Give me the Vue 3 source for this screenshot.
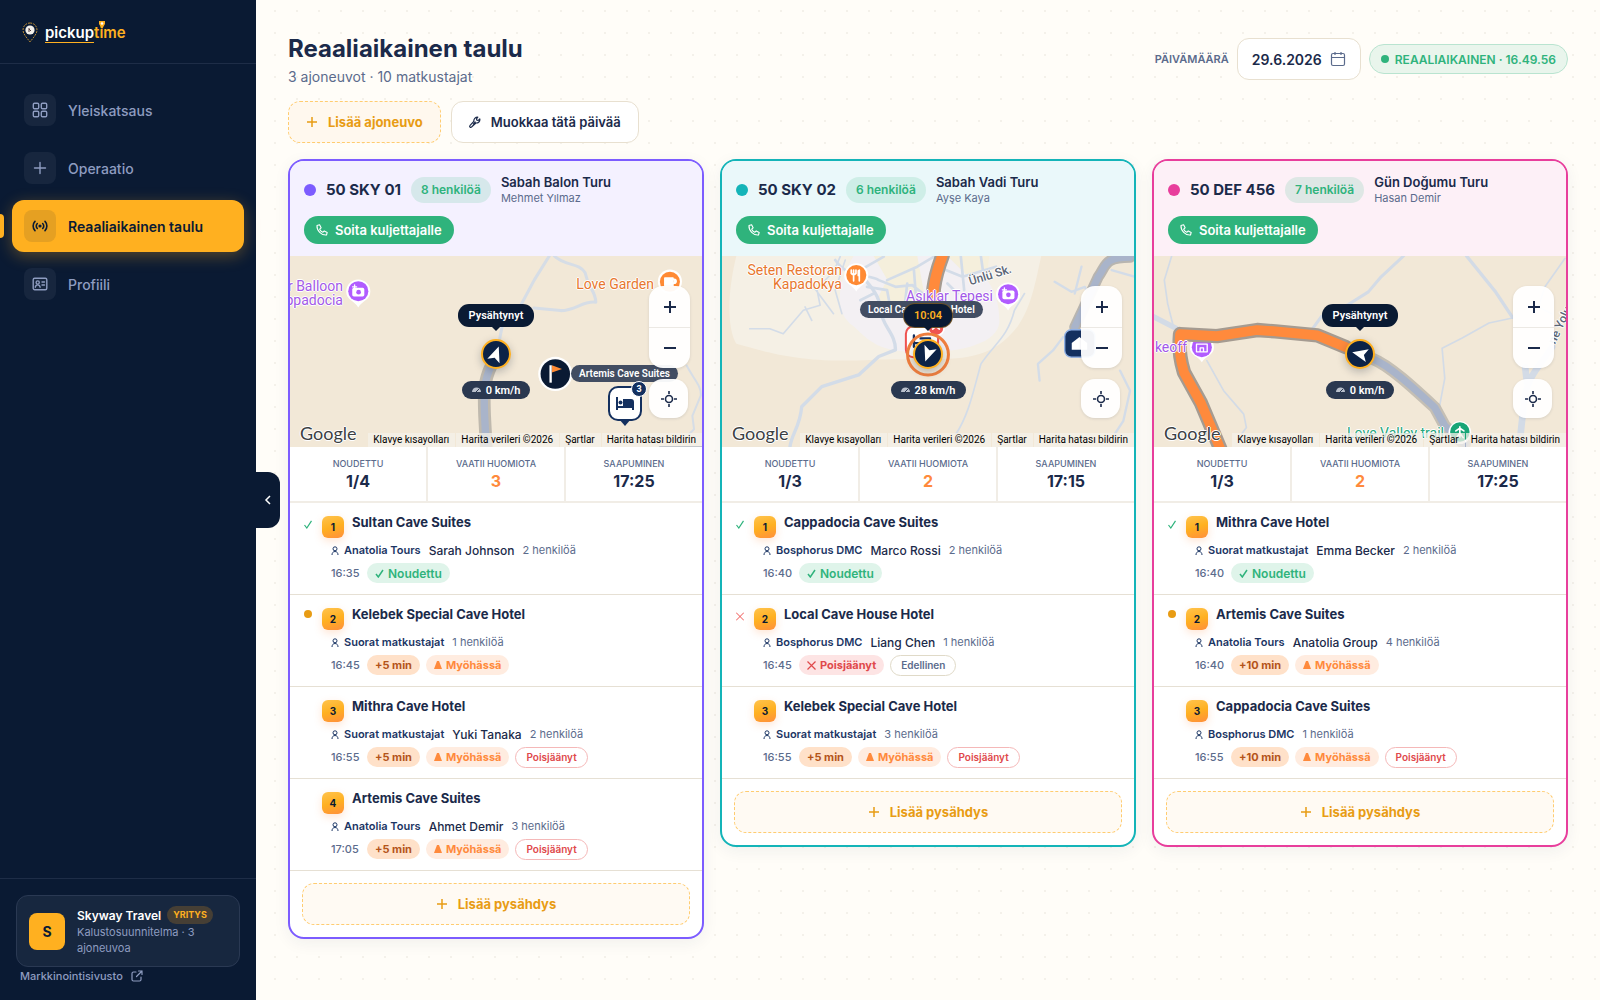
<script setup>
import { ref } from 'vue'

const date = ref('29.6.2026')

const nav = [
  { label: 'Yleiskatsaus', icon: 'grid' },
  { label: 'Operaatio', icon: 'plus' },
  { label: 'Reaaliaikainen taulu', icon: 'live', active: true },
  { label: 'Profiili', icon: 'card' },
]

const mapLinks = ['Klavye kısayolları', 'Harita verileri ©2026', 'Şartlar', 'Harita hatası bildirin']

const vehicles = [
  {
    tone: 'violet', plate: '50 SKY 01', pax: 8, tour: 'Sabah Balon Turu', driver: 'Mehmet Yılmaz',
    viewBox: '18 18 1236 570',
    heading: 20, bubble: 'Pysähtynyt', speed: '0 km/h',
    labels: [
      { lines: ['r Balloon', 'ppadocia'], color: 'purple', right: 359, top: 23 },
      { lines: ['Love Garden'], color: 'orange', right: 48, top: 21 },
    ],
    tag: { text: 'Artemis Cave Suites', x: 281, y: 109 },
    done: '1/4', attention: 3, eta: '17:25',
    stops: [
      { hotel: 'Sultan Cave Suites', agency: 'Anatolia Tours', guest: 'Sarah Johnson', pax: 2, time: '16:35', status: 'done' },
      { hotel: 'Kelebek Special Cave Hotel', agency: 'Suorat matkustajat', pax: 1, time: '16:45', status: 'current', delay: 5 },
      { hotel: 'Mithra Cave Hotel', agency: 'Suorat matkustajat', guest: 'Yuki Tanaka', pax: 2, time: '16:55', delay: 5 },
      { hotel: 'Artemis Cave Suites', agency: 'Anatolia Tours', guest: 'Ahmet Demir', pax: 3, time: '17:05', delay: 5 },
    ],
  },
  {
    tone: 'teal', plate: '50 SKY 02', pax: 6, tour: 'Sabah Vadi Turu', driver: 'Ayşe Kaya',
    viewBox: '24 18 1236 570',
    heading: 200, bubble: '10:04', timed: true, speed: '28 km/h',
    labels: [
      { lines: ['Seten Restoran', 'Kapadokya'], color: 'orange', right: 292, top: 7 },
      { lines: ['Aşıklar Tepesi'], color: 'purple', right: 141, top: 33 },
    ],
    tag: { text: 'Local Cave House Hotel', x: 138, y: 45 },
    done: '1/3', attention: 2, eta: '17:15',
    stops: [
      { hotel: 'Cappadocia Cave Suites', agency: 'Bosphorus DMC', guest: 'Marco Rossi', pax: 2, time: '16:40', status: 'done' },
      { hotel: 'Local Cave House Hotel', agency: 'Bosphorus DMC', guest: 'Liang Chen', pax: 1, time: '16:45', status: 'missed' },
      { hotel: 'Kelebek Special Cave Hotel', agency: 'Suorat matkustajat', pax: 3, time: '16:55', delay: 5 },
    ],
  },
  {
    tone: 'pink', plate: '50 DEF 456', pax: 7, tour: 'Gün Doğumu Turu', driver: 'Hasan Demir',
    viewBox: '24 18 1236 570',
    heading: 283, bubble: 'Pysähtynyt', speed: '0 km/h',
    labels: [
      { lines: ['keoff'], color: 'purple', right: 379, top: 84 },
      { lines: ['Love Valley trail'], color: 'green', right: 122, top: 170 },
    ],
    done: '1/3', attention: 2, eta: '17:25',
    stops: [
      { hotel: 'Mithra Cave Hotel', agency: 'Suorat matkustajat', guest: 'Emma Becker', pax: 2, time: '16:40', status: 'done' },
      { hotel: 'Artemis Cave Suites', agency: 'Anatolia Tours', guest: 'Anatolia Group', pax: 4, time: '16:40', status: 'current', delay: 10 },
      { hotel: 'Cappadocia Cave Suites', agency: 'Bosphorus DMC', pax: 1, time: '16:55', delay: 10 },
    ],
  },
]
</script>

<template>
  <div class="app">
    <aside class="sidebar">
      <a class="logo" href="#" aria-label="pickuptime">
        <svg width="16" height="22" viewBox="0 0 16 22">
          <path d="M8 1C4 1 1 4 1 8c0 4 4 8 7 12 3-4 7-8 7-12 0-4-3-7-7-7z" fill="#0a1a33" stroke="#b98a35" stroke-dasharray="2 1" />
          <circle cx="8" cy="8" r="4.6" fill="#f3f0ea" />
          <path d="M7 6v4M7 7l2 2" fill="none" stroke="#5a4040" />
        </svg>
        <span class="wordmark"><span class="pickup">pickup</span><span class="time">time</span>
          <svg class="logo-pin" width="6" height="8" viewBox="0 0 6 8"><path d="M0 0h6v3L3 8 0 3z" fill="#ffb020" /><circle cx="3" cy="2.5" r="1.3" fill="#fff" /></svg>
        </span>
      </a>
      <nav class="nav">
        <a v-for="item in nav" :key="item.label" href="#" class="nav-item" :class="{ active: item.active }">
          <span class="nav-icon">
            <svg width="16" height="16" viewBox="0 0 16 16" fill="none" stroke="currentColor" stroke-width="1.4" stroke-linecap="round" stroke-linejoin="round">
              <g v-if="item.icon === 'grid'"><rect x="1.3" y="1.3" width="5.4" height="5.4" rx="1.2" /><rect x="9.3" y="1.3" width="5.4" height="5.4" rx="1.2" /><rect x="1.3" y="9.3" width="5.4" height="5.4" rx="1.2" /><rect x="9.3" y="9.3" width="5.4" height="5.4" rx="1.2" /></g>
              <path v-else-if="item.icon === 'plus'" d="M8 2.5v11M2.5 8h11" />
              <g v-else-if="item.icon === 'live'" stroke-width="1.6"><circle cx="8" cy="8" r=".8" fill="currentColor" /><path d="M5.3 5.5a3.5 3.5 0 0 0 0 5M10.7 5.5a3.5 3.5 0 0 1 0 5M3 3.4a6.6 6.6 0 0 0 0 9.200M13 3.4a6.600 6.600 0 0 1 0 9.200" /></g>
              <g v-else><rect x="1.2" y="2.2" width="13.6" height="11.6" rx="1.5" /><circle cx="5.7" cy="6.5" r="1.6" /><path d="M3.3 11.2c.3-1.6 1.2-2.3 2.4-2.3s2.1.7 2.4 2.3M10 6h2.5M10 9h2.5" /></g>
            </svg>
          </span>
          {{ item.label }}
        </a>
      </nav>
      <div class="side-foot">
        <div class="company">
          <span class="avatar">S</span>
          <div>
            <div class="company-row"><strong>Skyway Travel</strong><span class="plan">YRITYS</span></div>
            <p>Kalustosuunnitelma · 3 ajoneuvoa</p>
          </div>
        </div>
        <a class="site-link" href="#">Markkinointisivusto
          <svg width="12" height="12" viewBox="0 0 12 12" fill="none" stroke="currentColor" stroke-width="1.2" stroke-linecap="round" stroke-linejoin="round"><path d="M5 2H2.5A1.5 1.5 0 0 0 1 3.5v6A1.5 1.5 0 0 0 2.5 11h6A1.5 1.5 0 0 0 10 9.500V7M7.500 1H11v3.500M11 1 5.500 6.500" /></svg>
        </a>
      </div>
      <button class="collapse" aria-label="Piilota valikko">
        <svg width="8" height="10" viewBox="0 0 8 10" fill="none" stroke="currentColor" stroke-width="1.5"><path d="M6 1 2 5l4 4" /></svg>
      </button>
    </aside>

    <main class="main">
      <header class="head">
        <div>
          <h1>Reaaliaikainen taulu</h1>
          <p class="subtitle">3 ajoneuvot · 10 matkustajat</p>
        </div>
        <div class="head-right">
          <label for="day">PÄIVÄMÄÄRÄ</label>
          <div class="date">
            <input id="day" v-model="date" type="text" />
            <svg width="16" height="16" viewBox="0 0 16 16" fill="none" stroke="#5b6b8c" stroke-width="1.2" stroke-linejoin="round"><rect x="1.5" y="2.5" width="13" height="12" rx="1.5" /><path d="M1.500 6.500h13M5 1v3M11 1v3" /></svg>
          </div>
          <span class="live"><i></i>REAALIAIKAINEN · 16.49.56</span>
        </div>
      </header>
      <div class="actions">
        <button class="add">
          <svg width="12" height="12" viewBox="0 0 12 12" stroke="currentColor" stroke-width="1.5"><path d="M6 1v10M1 6h10" /></svg>
          Lisää ajoneuvo
        </button>
        <button class="edit">
          <svg width="12" height="12" viewBox="0 0 12 12" fill="none" stroke="currentColor" stroke-width="1.2" stroke-linejoin="round"><path d="M1 11c-.5-.6-.4-1.200.1-1.700l3.700-3.900C4.600 3 6.200 1.100 8.800 1.100L7.500 2.800l.3 1.400 1.500.2 1.500-1.400c.4 2.400-1.500 4.200-3.900 4L2.800 10.800c-.5.5-1.300.7-1.800.2zM4 8.300 6.500 5.700" /></svg>
          Muokkaa tätä päivää
        </button>
      </div>

      <div class="board">
        <section v-for="(v, n) in vehicles" :key="v.plate" class="vehicle" :class="v.tone">
          <header class="vehicle-head">
            <div class="vehicle-row">
              <i class="dot"></i>
              <h2>{{ v.plate }}</h2>
              <span class="pax">{{ v.pax }} henkilöä</span>
              <div class="tour"><strong>{{ v.tour }}</strong><span>{{ v.driver }}</span></div>
            </div>
            <button class="call">
              <svg width="12" height="12" viewBox="0 0 12 12" fill="none" stroke="currentColor" stroke-width="1.1" stroke-linejoin="round"><path d="M1 1.500 3.600.8l1.500 3-1.400 1.400c.7 1.500 1.600 2.400 3.100 3.100l1.400-1.400 3 1.500-.7 2.600C5.500 11.500.5 6.500 1 1.500z" /></svg>
              Soita kuljettajalle
            </button>
          </header>

          <div class="map">
            <svg class="terrain" :viewBox="v.viewBox" preserveAspectRatio="xMidYMid slice" fill="none" stroke-linejoin="round" stroke-linecap="round">
              <g v-if="n === 0">
                <g stroke="#d6dde6" stroke-width="9">
                  <path d="M795 18 750 90 710 165" /><path d="M810 18c30 30 75 20 92 50 10 50 30 50 32 88-40-5-60 25-105 25l-80-8" /><path d="M655 225 640 300" />
                  <path d="M1205 345c20 40 45 60 42 90l-25 60 5 40-15 15" stroke-width="6" />
                </g>
                <path d="M622 345c-25 50-22 90-20 150l5 95" stroke="#bfb9ae" stroke-width="38" />
                <path d="M622 345c-25 50-22 90-20 150l5 95" stroke="#a9b4ca" stroke-width="22" />
                <path d="M1125 588h130" stroke="#33496f" stroke-width="6" />
                <path d="M225 88a36 36 0 0 0-36 36c0 26 26 28 36 48 10-20 36-22 36-48a36 36 0 0 0-36-36z" fill="#fff" /><circle cx="225" cy="123" r="30" fill="#b15cff" /><rect x="207" y="113" width="36" height="26" rx="5" fill="#fff" /><circle cx="226" cy="126" r="7" fill="#b15cff" /><path d="M214 104v12M208 110h12" stroke="#fff" stroke-width="4" />
                <circle cx="1155" cy="94" r="36" fill="#fff" /><circle cx="1155" cy="95" r="30" fill="#ff8a34" /><path d="M1140 84h24v22h-24zM1166 88c10-4 10 14 0 11" fill="#fff" stroke="#fff" stroke-width="5" />
                <circle cx="813" cy="370" r="51" fill="#fff" /><circle cx="813" cy="370" r="44" fill="#0a1a33" /><path d="M799 344v52" stroke="#fff" stroke-width="7" stroke-linecap="butt" /><path d="m803 344 30 11-30 11z" fill="#ff8a34" />
              </g>
              <g v-else-if="n === 1">
                <path d="M70 18C40 140 45 240 70 280c80 20 180 60 400 48 220-10 340 30 440-100 40-60 50-120 70-210z" fill="#f5f0e5" />
                <path d="M420 18c-50 80-60 170 0 210 60 60 90 75 200 78 130 0 230-30 235-90 0-70-20-110-50-140l15-58z" fill="#f3f0f3" />
                <path d="M480 18l40 70-30 60 80 30 60-50-20-110zM700 18l60 60 60-20 5-40z" fill="#f5efdc" />
                <g stroke="#d3dce8" stroke-width="8">
                  <path d="M230 588c5-40 30-60 35-120l60-60 110-35 60-55 50-20c0-50-40-70-45-120 0-50-50-90-80-130" stroke-width="10" />
                  <path d="M110 235h60l40 15 60-70 50-15-10-50 50-50 20-45M275 170l20 40M300 110l60 80M395 30l-30 90 20 70" stroke-width="5" />
                  <path d="M365 30c40 60 100 40 130 60l50 20 50-5 50 40M440 60l70-40M460 110l60 10 10 55 60 20 60-40M520 90l90-40 50-30M480 130l-40 20M580 100l-10 90M600 60l10 130M695 60l50 20 100-30M700 100l30 30M740 20l10 100M800 20l10 70" />
                  <path d="M725 550c40-60 55-140 75-210 40-60 80-80 100-160l30-50" stroke-width="5" />
                  <path d="M1020 95l50 30 40-15 30 60M1080 130l20-80M1045 260l-30 40-45 40 5 50M1190 60l70 20M1215 360l30 60-20 90-25 38" stroke-width="7" />
                </g>
                <path d="M685 18c-30 80-30 120-27 170l5 50" stroke="#a59b91" stroke-width="44" /><path d="M685 18c-30 80-30 120-27 170l5 50" stroke="#ff8a3c" stroke-width="31" />
                <path d="M1245 22c-80 0-70 25-95 58l-30 65-40 85" stroke="#b8b5b0" stroke-width="33" /><path d="M1245 22c-80 0-70 25-95 58l-30 65-40 85" stroke="#a9b4ca" stroke-width="21" />
                <path d="M428 40a36 36 0 0 0-36 36c0 26 26 28 36 48 10-20 36-22 36-48a36 36 0 0 0-36-36z" fill="#fff" /><circle cx="428" cy="75" r="30" fill="#ff8a34" /><path d="M420 60v32M413 60v10q7 8 14 0V60M437 60v32M434 62v14h3" stroke="#fff" stroke-width="5" />
                <path d="M881 97a36 36 0 0 0-36 36c0 26 26 28 36 48 10-20 36-22 36-48a36 36 0 0 0-36-36z" fill="#fff" /><circle cx="881" cy="132" r="30" fill="#b15cff" /><rect x="864" y="121" width="36" height="26" rx="5" fill="#fff" /><circle cx="882" cy="134" r="7" fill="#b15cff" /><path d="M870 113v12M864 119h12" stroke="#fff" stroke-width="4" />
                <rect x="1050" y="238" width="90" height="82" rx="20" fill="#14305f" stroke="#8fb0e6" stroke-width="4" /><path d="m1071 278 23-18 23 18v20h-46z" fill="#fff" />
                <rect x="576" y="228" width="96" height="92" rx="22" fill="#fff" stroke="#ef5350" stroke-width="6" /><path d="M600 255v34M600 278h48M620 264h28v14" stroke="#14305f" stroke-width="7" />
                <circle cx="666" cy="232" r="24" fill="#ef5350" stroke="#fff" stroke-width="5" /><path d="m656 236 10-8 10 8" stroke="#fff" stroke-width="5" />
                <circle cx="642" cy="312" r="61" stroke="#f07f3e" stroke-width="9" />
              </g>
              <g v-else>
                <g stroke="#d3dbe6" stroke-width="7">
                  <path d="M24 198 95 235" stroke-width="16" /><path d="M80 18 58 90l10 70 15 60M185 330l50 90 60 70 8 40-15 20" stroke-width="5" />
                  <path d="M772 18 705 80l-38 45-60 38-80 35-30 42" stroke-width="9" /><path d="M960 18l85 105 52 78" stroke-width="10" />
                  <path d="M1254 25l-60 85-20 60 40 20M1097 203l-70 15-80 45-60 30 8 90-15 80 10 70" stroke-width="5" />
                  <path d="M1215 290c-30 50-70 80-82 150l-15 140M1135 350l5 45" stroke-width="20" />
                </g>
                <path d="M170 255a36 36 0 0 0-36 36c0 24 26 26 36 44 10-18 36-20 36-44a36 36 0 0 0-36-36z" fill="#fff" /><circle cx="170" cy="290" r="30" fill="#b15cff" /><path d="M154 281h32v23h-32zM165 304v-12h10v12" stroke="#fff" stroke-width="4" />
                <path d="M600 290l-85-35-125-12-55-4-120 18-40-2-70-4c-5 60 5 90 12 115l50 90 60 142" stroke="#a59b91" stroke-width="43" /><path d="M600 290l-85-35-125-12-55-4-120 18-40-2-70-4c-5 60 5 90 12 115l50 90 60 142" stroke="#ff8a3c" stroke-width="29" />
                <path d="M680 325c50 20 120 85 185 145l30 55 60 55" stroke="#c5bfb4" stroke-width="36" /><path d="M680 325c50 20 120 85 185 145l30 55 60 55" stroke="#a9b4ca" stroke-width="22" />
                <circle cx="940" cy="545" r="34" fill="#fff" /><circle cx="940" cy="543" r="29" fill="#18a576" /><path d="M940 528v30M928 540l12-8 12 8M930 560l10-14 10 14" stroke="#fff" stroke-width="5" />
              </g>
            </svg>

            <div v-for="l in v.labels" :key="l.lines[0]" class="place" :class="l.color" :style="{ right: l.right + 'px', top: l.top + 'px' }">
              <div v-for="t in l.lines" :key="t">{{ t }}</div>
            </div>
            <span v-if="n === 1" class="street">Ünlü Sk.</span>
            <span v-if="n === 2" class="street side">ne Yolu</span>
            <span v-if="v.tag" class="tag" :style="{ left: v.tag.x + 'px', top: v.tag.y + 'px' }">{{ v.tag.text }}</span>
            <div v-if="n === 0" class="hotel-pin">
              <svg width="34" height="41" viewBox="0 0 34 41"><path d="m11 33 6 7 6-7z" fill="#14305f" /><rect x="1" y="1" width="32" height="33" rx="9" fill="#fff" stroke="#14305f" stroke-width="2" /><path d="M9 11v13M9 21h16v3M25 21v-5a2 2 0 0 0-2-2h-7v6" fill="none" stroke="#14305f" stroke-width="2" /><path d="M16 14h7a2 2 0 0 1 2 2v5h-9z" fill="#14305f" /><circle cx="12.5" cy="16.5" r="2" fill="#14305f" /></svg>
              <b>3</b>
            </div>

            <div class="tracker">
              <span class="bubble" :class="{ timed: v.timed }">{{ v.bubble }}</span>
              <span class="vehicle-pin">
                <svg width="24" height="24" viewBox="-12 -12 24 24"><path d="M0-8 6.500 7.500 0 4-6.500 7.500z" fill="#fff" :transform="`rotate(${v.heading})`" /></svg>
              </span>
              <span class="speed">
                <svg width="9" height="6" viewBox="0 0 9 6"><path d="M0 5a4.500 4.500 0 0 1 9 0z" fill="#b9c0cc" /><path d="m4 5 3-3" stroke="#2a3850" /></svg>
                {{ v.speed }}
              </span>
            </div>

            <div class="zoom">
              <button aria-label="Lähennä"><svg width="14" height="14" viewBox="0 0 14 14" stroke="currentColor" stroke-width="2"><path d="M7 1v12M1 7h12" /></svg></button>
              <button aria-label="Loitonna"><svg width="14" height="14" viewBox="0 0 14 14" stroke="currentColor" stroke-width="2"><path d="M1 7h12" /></svg></button>
            </div>
            <button class="locate" aria-label="Keskitä">
              <svg width="18" height="18" viewBox="0 0 18 18" fill="none" stroke="currentColor" stroke-width="1.6"><circle cx="9" cy="9" r="3.500" /><path d="M9 1v3M9 14v3M1 9h3M14 9h3" /></svg>
            </button>
            <div class="map-foot">
              <span class="google">Google</span>
              <a v-for="l in mapLinks" :key="l" href="#">{{ l }}</a>
            </div>
          </div>

          <dl class="stats">
            <div><dt>NOUDETTU</dt><dd>{{ v.done }}</dd></div>
            <div><dt>VAATII HUOMIOTA</dt><dd class="warn">{{ v.attention }}</dd></div>
            <div><dt>SAAPUMINEN</dt><dd>{{ v.eta }}</dd></div>
          </dl>

          <ol class="stops">
            <li v-for="(s, i) in v.stops" :key="s.hotel" class="stop">
              <span class="state" :class="s.status">
                <svg v-if="s.status === 'done'" width="8" height="9" viewBox="0 0 8 9" fill="none" stroke="#2fb37c" stroke-width="1.2"><path d="m.5 5 2.300 3L7.500.8" /></svg>
                <svg v-else-if="s.status === 'missed'" width="8" height="9" viewBox="0 0 8 9" stroke="#ef5350"><path d="m0 .5 8 8M8 .5l-8 8" /></svg>
                <i v-else-if="s.status === 'current'"></i>
              </span>
              <span class="index">{{ i + 1 }}</span>
              <div class="info">
                <h3>{{ s.hotel }}</h3>
                <div class="who">
                  <svg width="8" height="9" viewBox="0 0 8 9" fill="none" stroke="currentColor"><circle cx="4" cy="2.800" r="2" /><path d="M1 9c0-2 1-3.500 3-3.500S7 7 7 9" /></svg>
                  <strong>{{ s.agency }}</strong>
                  <b v-if="s.guest">{{ s.guest }}</b>
                  <span>{{ s.pax }} henkilöä</span>
                </div>
                <div class="when">
                  <time>{{ s.time }}</time>
                  <span v-if="s.status === 'done'" class="chip green"><svg width="9" height="9" viewBox="0 0 9 9" fill="none" stroke="currentColor" stroke-width="1.5"><path d="m1 5 2.300 3L8 1" /></svg>Noudettu</span>
                  <template v-else-if="s.status === 'missed'">
                    <span class="chip red"><svg width="9" height="9" viewBox="0 0 9 9" stroke="currentColor" stroke-width="1.2"><path d="m.5.5 8 8M8.500.5l-8 8" /></svg>Poisjäänyt</span>
                    <button class="mini">Edellinen</button>
                  </template>
                  <template v-else>
                    <span class="chip delay">+{{ s.delay }} min</span>
                    <span class="chip late"><svg width="8" height="8" viewBox="0 0 8 8"><path d="M3 0h2l3 8H0z" fill="currentColor" /></svg>Myöhässä</span>
                    <button v-if="!s.status" class="mini danger">Poisjäänyt</button>
                  </template>
                </div>
              </div>
            </li>
          </ol>
          <div class="vehicle-foot">
            <button class="add">
              <svg width="12" height="12" viewBox="0 0 12 12" stroke="currentColor" stroke-width="1.5"><path d="M6 1v10M1 6h10" /></svg>
              Lisää pysähdys
            </button>
          </div>
        </section>
      </div>
    </main>
  </div>
</template>

<style>
body { background: #fffdf8; }
</style>

<style scoped>
* { box-sizing: border-box; margin: 0; padding: 0; }
.app {
  display: flex; min-height: 100vh; color: #1b2a4a;
  font-family: Inter, "Open Sans", sans-serif; font-size: 13px;
  background: radial-gradient(circle, #f4f1ea 1px, transparent 1px) 0 0 / 22px 22px #fffdf8;
}
button, input { font: inherit; color: inherit; background: none; border: 0; }
a { color: inherit; text-decoration: none; }
svg { display: block; flex: none; }
i { display: block; flex: none; border-radius: 50%; }

.sidebar { position: sticky; top: 0; flex: none; width: 256px; height: 100vh; display: flex; flex-direction: column; background: #0a1a33; color: #8e9cc0; z-index: 2; }
.logo { display: flex; align-items: center; gap: 7px; height: 64px; padding: 2px 22px 0; border-bottom: 1px solid #1e2d47; }
.wordmark { position: relative; font-weight: 600; font-size: 15px; line-height: 18px; }
.pickup { color: #fff; box-shadow: 0 1px #ffb020; }
.time { color: #ffb020; }
.logo-pin { position: absolute; right: 21px; top: -3px; }
.nav { display: flex; flex-direction: column; gap: 6px; padding: 20px 12px; }
.nav-item { position: relative; display: flex; align-items: center; gap: 12px; height: 52px; padding: 0 12px; border-radius: 12px; font-size: 14px; font-weight: 500; }
.nav-icon { display: grid; place-items: center; width: 32px; height: 32px; border-radius: 8px; background: #17263e; }
.active { background: #ffb020; color: #0a1a33; font-weight: 600; box-shadow: 0 4px 16px #ffb02050; }
.active .nav-icon { background: #e5a022; }
.active::before { content: ""; position: absolute; left: -12px; top: 14px; width: 4px; height: 24px; border-radius: 0 4px 4px 0; background: #ffb020; }
.side-foot { margin-top: auto; padding: 16px; border-top: 1px solid #1e2d47; }
.company { display: flex; align-items: center; gap: 12px; padding: 10px 12px; border: 1px solid #2a3953; border-radius: 12px; background: #17273f; }
.avatar { flex: none; display: grid; place-items: center; width: 36px; height: 37px; border-radius: 8px; background: #ffb020; color: #0a1a33; font-weight: 700; font-size: 14px; }
.company-row { display: flex; align-items: center; gap: 6px; height: 18px; color: #fff; }
.company-row strong { font-size: 12px; font-weight: 600; white-space: nowrap; }
.plan { padding: 0 6px; border-radius: 9px; background: #463f35; color: #ffb020; font-size: 9px; line-height: 18px; font-weight: 700; }
.company p { font-size: 11px; line-height: 16px; }
.site-link { display: flex; align-items: center; gap: 8px; margin-top: 1px; padding-left: 4px; font-size: 11px; line-height: 16px; font-weight: 500; }
.collapse { position: absolute; left: 256px; top: 472px; display: grid; place-items: center; width: 24px; height: 56px; border-radius: 0 12px 12px 0; background: #0a1a33; color: #fff; }

.main { flex: 1; min-width: 0; padding: 32px 32px 40px; }
.head { display: flex; justify-content: space-between; }
h1 { font-size: 24px; line-height: 34px; font-weight: 700; }
.subtitle { margin-top: 1px; font-size: 14px; line-height: 20px; color: #5b6b8c; }
.head-right { display: flex; align-items: center; gap: 8px; height: 54px; color: #1b2a4a; }
.head-right label { font-size: 11px; font-weight: 600; color: #5b6b8c; }
.date { display: flex; align-items: center; width: 124px; height: 42px; padding: 0 14px; border: 1px solid #e8e0d0; border-radius: 12px; background: #fff; }
.date input { flex: 1; min-width: 0; width: 0; font-size: 14px; font-weight: 600; outline: 0; }
.live { display: flex; align-items: center; gap: 6px; height: 30px; padding: 0 11px; border: 1px solid #b9e4d0; border-radius: 15px; background: #e9f5ec; color: #2fb37c; font-size: 12px; font-weight: 600; white-space: nowrap; }
.live i { width: 8px; height: 8px; background: #2fb37c; }
.actions { display: flex; gap: 10px; margin: 14px 0 16px; }
.add, .edit { display: flex; align-items: center; justify-content: center; gap: 10px; height: 42px; padding: 0 17px; border-radius: 12px; font-weight: 700; white-space: nowrap; }
.add { border: 1px dashed #ffcc70; background: #fff8ee; color: #e89c14; }
.edit { border: 1px solid #e8e0d0; background: #fff; font-weight: 600; }

.board { display: grid; grid-template-columns: repeat(3, minmax(0, 1fr)); gap: 16px; align-items: start; }
.vehicle { border: 2px solid var(--tone); border-radius: 16px; background: #fff; overflow: hidden; box-shadow: 0 4px 16px #1b2a4a10; }
.violet { --tone: #7c5cff; --tint: #f4f1ff; }
.teal { --tone: #14b4b8; --tint: #eaf8fa; }
.pink { --tone: #e83e9c; --tint: #fdf0f7; }
.vehicle-head { padding: 12px 14px; background: var(--tint); }
.vehicle-row { display: flex; align-items: center; gap: 10px; height: 34px; margin-bottom: 9px; white-space: nowrap; }
.dot { width: 12px; height: 12px; background: var(--tone); }
h2 { font-size: 15px; line-height: 20px; font-weight: 700; }
.pax { padding: 0 10px; border-radius: 13px; background: color-mix(in srgb, #2fb37c 15%, var(--tint)); color: #2fb37c; font-size: 12px; line-height: 26px; font-weight: 600; }
.tour { display: flex; flex-direction: column; }
.tour strong { font-size: 13px; line-height: 17px; font-weight: 600; }
.tour span { font-size: 11px; line-height: 15px; color: #5b6b8c; }
.call { display: flex; align-items: center; gap: 7px; height: 28px; padding: 0 12px; border-radius: 14px; background: #2fb37c; color: #fff; font-size: 13px; font-weight: 600; }

.map { position: relative; height: 191px; overflow: hidden; background: #f2e8d7; font-family: Roboto, sans-serif; }
.terrain { position: absolute; width: 100%; height: 100%; }
.place { position: absolute; text-align: right; white-space: nowrap; font-size: 14px; line-height: 14px; text-shadow: 1px 0 #fff, -1px 0 #fff, 0 1px #fff, 0 -1px #fff; }
.purple { color: #a259e8; }
.orange { color: #e8772e; }
.green { color: #25a67c; }
.street { position: absolute; left: 246px; top: 12px; color: #5c6675; font-size: 12px; font-weight: 500; transform: rotate(-17deg); text-shadow: 1px 0 #fff, -1px 0 #fff, 0 1px #fff, 0 -1px #fff; }
.street.side { left: 386px; top: 62px; transform: rotate(-65deg); white-space: nowrap; }
.tag { position: absolute; padding: 0 8px; border-radius: 9px; background: #424d62; color: #fff; font-size: 10px; line-height: 17px; font-weight: 600; white-space: nowrap; }
.hotel-pin { position: absolute; left: 318px; top: 130px; }
.hotel-pin b { position: absolute; right: -5px; top: -5px; width: 16px; border: 1px solid #fff; border-radius: 50%; background: #14305f; color: #fff; font-size: 9px; line-height: 14px; text-align: center; }
.tracker { position: absolute; left: 50%; top: 48px; width: 100px; margin-left: -50px; display: flex; flex-direction: column; align-items: center; }
.bubble { position: relative; padding: 0 11px; border-radius: 11px; background: #0a1a33; color: #fff; font-size: 11px; line-height: 23px; font-weight: 600; }
.bubble::after { content: ""; position: absolute; left: 50%; bottom: -4px; margin-left: -5px; border: 5px solid transparent; border-top-color: #0a1a33; border-bottom: 0; }
.timed { padding: 0 10px; color: #ffb020; box-shadow: 0 0 0 1px #6b5128; }
.vehicle-pin { display: grid; place-items: center; width: 30px; height: 30px; margin: 12px 0; border: 2px solid #ffb020; border-radius: 50%; background: #0d2347; box-shadow: 0 3px 8px #0a1a3340; }
.speed { display: flex; align-items: center; gap: 5px; height: 18px; padding: 0 10px; border-radius: 9px; background: #2a3850; color: #fff; font-size: 11px; font-weight: 600; white-space: nowrap; }
.zoom { position: absolute; right: 12px; top: 30px; width: 41px; border-radius: 14px; background: #fffffff2; overflow: hidden; box-shadow: 0 1px 3px #1b2a4a20; }
.zoom button { display: grid; place-items: center; width: 100%; height: 41px; }
.zoom button + button { border-top: 1px solid #ece9e4; }
.locate { position: absolute; right: 14px; top: 123px; display: grid; place-items: center; width: 39px; height: 39px; border-radius: 14px; background: #fffffff2; box-shadow: 0 1px 3px #1b2a4a20; }
.map-foot { position: absolute; left: 10px; right: 0; bottom: 0; display: flex; align-items: flex-end; justify-content: flex-end; gap: 1px; color: #000; }
.google { margin-right: auto; padding-bottom: 4px; font-family: Lato, sans-serif; font-size: 18px; line-height: 20px; color: #3c4043; text-shadow: 1px 0 #fff, -1px 0 #fff, 0 1px #fff, 0 -1px #fff; }
.map-foot a { padding: 0 6px 0 5px; background: #f5f1eac0; font-size: 10px; line-height: 14px; white-space: nowrap; }

.stats { display: grid; grid-template-columns: repeat(3, minmax(0, 1fr)); gap: 2px; background: #f1ede6; border-bottom: 2px solid #f1ede6; }
.stats div { height: 54px; padding-top: 10px; background: #fff; text-align: center; }
.stats dt { font-size: 9px; line-height: 14px; font-weight: 500; color: #5b6b8c; white-space: nowrap; }
.stats dd { font-size: 16px; line-height: 20px; font-weight: 700; }
.stats .warn { color: #ff8a3c; }

.stops { list-style: none; }
.stop { display: flex; height: 92px; padding: 9px 14px 0; border-bottom: 1px solid #e6e0d4; }
.state { width: 8px; margin: 8px 10px 0 0; }
.state.current { margin-top: 6px; }
.state i { width: 8px; height: 8px; background: #e89c14; }
.index { flex: none; display: grid; place-items: center; width: 22px; height: 22px; margin-top: 4px; border-radius: 6px; background: linear-gradient(165deg, #ffc34d, #ffb020 50%, #ff8f3c); box-shadow: 0 3px 8px #ff8a3c38; font-size: 10px; font-weight: 700; color: #0a1a33; }
.info { margin-left: -13px; }
h3 { padding-left: 21px; font-size: 13px; line-height: 20px; font-weight: 700; }
.who, .when { display: flex; align-items: center; white-space: nowrap; }
.who { gap: 5px; height: 18px; margin-top: 9px; color: #1b3564; }
.who strong { font-size: 11px; font-weight: 600; }
.who b { margin-left: 3px; color: #1b2a4a; font-size: 12px; font-weight: 500; }
.who span { margin-left: 3px; color: #5b6b8c; font-size: 11px; }
.when { gap: 6px; height: 22px; margin-top: 3px; }
.when time { min-width: 30px; color: #5b6b8c; font-size: 11px; font-weight: 500; }
.chip { display: flex; align-items: center; gap: 4px; height: 20px; padding: 0 8px; border-radius: 10px; font-size: 11px; font-weight: 700; }
.chip.green { background: #dff4ea; color: #2fb37c; font-size: 12px; font-weight: 600; }
.chip.red { background: #fde4e4; color: #e0494b; }
.chip.delay { background: #ffe1c9; color: #b4541a; }
.chip.late { background: #ffece0; color: #ff8a3c; }
.mini { height: 21px; padding: 0 10px; border: 1px solid #e0dac8; border-radius: 11px; background: #fff; color: #5b6b8c; font-size: 10px; font-weight: 600; }
.mini.danger { border-color: #f5b8b8; color: #e0494b; }
.vehicle-foot { padding: 12px; }
.vehicle-foot .add { width: 100%; background: #fffaf3; }
</style>
